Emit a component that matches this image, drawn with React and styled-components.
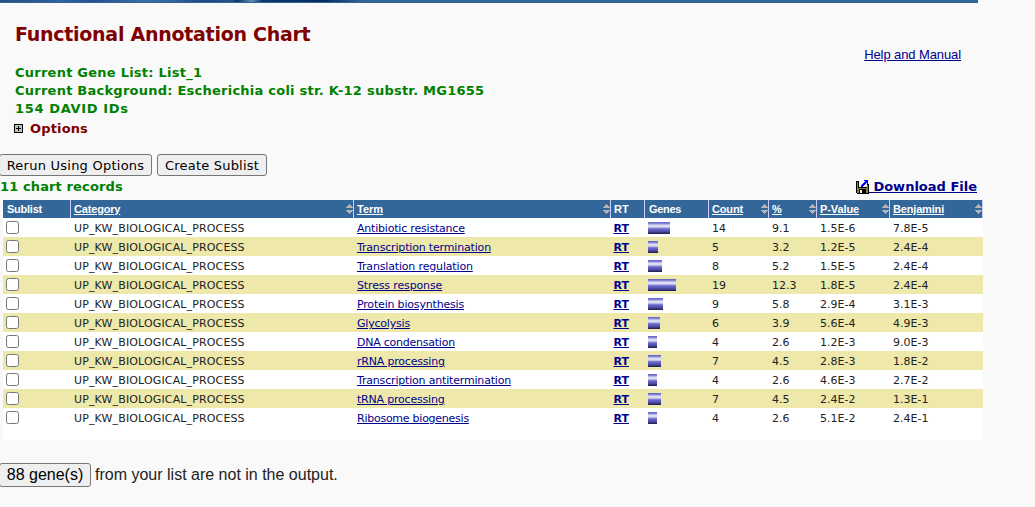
import React from "react";
import styled, { createGlobalStyle } from "styled-components";

const verdana = `Verdana, "DejaVu Sans", sans-serif`;
const arial = `"Liberation Sans", Arial, sans-serif`;

const GlobalStyle = createGlobalStyle`
  * { box-sizing: border-box; }
  body { margin: 0; background: #f9f9f9; color: #222; font-family: ${verdana}; overflow: hidden; }
`;

const Page = styled.main`
  width: 1035px;
  height: 507px;
  overflow: hidden;
`;

const Banner = styled.div`
  width: 978px;
  height: 3px;
  border-bottom: 1px solid #2f6399;
  background: linear-gradient(90deg, #24507f 0, #2a5b92 40px, #2f659e 60px, #234f8e 95px, #3a6da3 140px, #3468a0 170px, #1d4a85 200px, #235287 232px, #0d3164 237px, #5f8fb5 252px, #0f3768 262px, #062c5e 325px, #336699 362px, #336699 100%);
`;

const Intro = styled.header`
  display: flex;
  justify-content: space-between;
  width: 961px;
  height: 151px;
  padding: 19px 0 0 15px;
`;

const Title = styled.h1`
  margin: 0 0 18px;
  font-size: 19px;
  line-height: 24px;
  letter-spacing: -0.27px;
  color: #800000;
  white-space: nowrap;
`;

const Fact = styled.p`
  margin: 0;
  font-size: 13px;
  font-weight: bold;
  line-height: 18px;
  letter-spacing: ${(p) => p.$spacing || 0}px;
  color: #008000;
  white-space: nowrap;
`;

const Options = styled.div`
  display: flex;
  align-items: center;
  gap: 7px;
  height: 20px;
  margin-left: -1px;
  font-size: 13px;
  font-weight: bold;
  letter-spacing: 0.15px;
  color: #800000;
`;

const HelpLink = styled.a`
  height: 16px;
  margin-top: 25px;
  font: 13px/16px ${arial};
  letter-spacing: -0.1px;
  color: #00008b;
  text-decoration: underline;
`;

const Buttons = styled.div`
  display: flex;
  gap: 5px;
  margin-left: -1px;
`;

const Button = styled.button`
  width: ${(p) => p.$width}px;
  height: ${(p) => p.$height || 22}px;
  padding: 0;
  border: 1px solid #767676;
  border-radius: 3px;
  background: #efefef;
  color: #000;
  font: ${(p) => p.$font || `13px ${verdana}`};
  letter-spacing: ${(p) => p.$spacing || 0}px;
  white-space: nowrap;
`;

const Records = styled.div`
  display: flex;
  justify-content: space-between;
  width: 977px;
  height: 24px;
  padding-top: 2px;
`;

const Download = styled.a`
  display: flex;
  font-size: 13px;
  font-weight: bold;
  line-height: 18px;
  color: #00008b;
  text-decoration: underline;
  white-space: pre;
  svg { margin-top: 2px; }
`;

const Table = styled.section`
  width: 980px;
  height: 240px;
  margin-left: 3px;
  background: #fff;
`;

const columns = "68px 283px 257px 34px 64px 60px 48px 73px 93px";

const HeadRow = styled.div`
  display: grid;
  grid-template-columns: ${columns};
  height: 18px;
  background: #336699;
`;

const HeadCell = styled.div`
  display: flex;
  align-items: center;
  justify-content: space-between;
  border-right: 1px solid #ccccff;
  padding-left: ${(p) => p.$pad}px;
  font: bold 11px/18px ${arial};
  letter-spacing: ${(p) => p.$spacing}px;
  color: #fff;
  span { text-decoration: ${(p) => (p.$sortable ? "underline" : "none")}; }
`;

const Row = styled.div`
  display: grid;
  grid-template-columns: ${columns};
  height: 19px;
  background: ${(p) => (p.$striped ? "#eee8aa" : "#fff")};
`;

const Cell = styled.div`
  padding: 1px 0 0 ${(p) => p.$pad || 3}px;
  font-size: 11px;
  line-height: 20px;
  height: 19px;
  letter-spacing: ${(p) => p.$spacing || 0}px;
  white-space: nowrap;
`;

const Check = styled.input`
  display: block;
  width: 13px;
  height: 13px;
  margin: 3px 0 0 3px;
`;

const Link = styled.a`
  color: #00008b;
  text-decoration: underline;
  font-weight: ${(p) => (p.$bold ? "bold" : "normal")};
`;

const Bar = styled.div`
  height: 12px;
  margin: 4px 0 0 3px;
  background: linear-gradient(#6a6acb 0 1px, #8484d4 1px 2px, #b5b5e6 2px 3px, #dcdcf5 3px 4px, #dcdcf5 4px 5px, #b8b8e6 5px 6px, #7d7dd0 6px 7px, #6464c8 7px 8px, #5858b8 8px 9px, #4c4ca4 9px 10px, #38387e 10px 11px, #25255a 11px 12px);
`;

const Footer = styled.footer`
  display: flex;
  align-items: center;
  gap: 4px;
  margin: 23px 0 0 -1px;
  font: 16px ${arial};
  color: #222;
`;

const SortIcon = () => (
  <svg width="7" height="10" viewBox="0 0 7 10" fill="#b4b4b4" shapeRendering="crispEdges">
    <path d="M3 0h1v1h1v1h1v1h1v1H0V3h1V2h1V1h1zM0 6h7v1H6v1H5v1H4v1H3V9H2V8H1V7H0z" />
  </svg>
);

const PlusIcon = () => (
  <svg width="9" height="9" viewBox="0 0 9 9" shapeRendering="crispEdges">
    <rect width="9" height="9" fill="#000" />
    <rect x="1" y="1" width="7" height="7" fill="#c0c0c0" />
    <path d="M4 2h1v2h2v1H5v2H4V5H2V4h2z" fill="#000" />
  </svg>
);

const DiskIcon = () => (
  <svg width="13" height="14" viewBox="0 0 13 14" shapeRendering="crispEdges">
    <path d="M0 1h13v13H1v-1H0z" fill="#000" />
    <path d="M1 2h1v6h9V5h1v8h-2V9H3v4H1z" fill="#808040" />
    <path d="M3 1h10v3h-2v3H3z" fill="#f4f4f4" />
    <path d="M3 9h7v4H3z" fill="#000" />
    <path d="M4 10h2v3H4z" fill="#e4e4e4" />
    <path d="M8 0h4v4h-1V3h-1v1H9v1H8v1H7v1H5V5h1V4h1V3h1V2h1V1H8z" fill="#0000ff" />
  </svg>
);

const heads = [
  ["Sublist", 4, false, -0.25],
  ["Category", 3, true, -0.17],
  ["Term", 3, true, 0],
  ["RT", 3, false, 0],
  ["Genes", 4, false, -0.3],
  ["Count", 3, true, -0.15],
  ["%", 3, true, 0],
  ["P-Value", 3, true, -0.1],
  ["Benjamini", 3, true, -0.17],
];

const rows = [
  ["Antibiotic resistance", -0.2, 22, "14", "9.1", "1.5E-6", "7.8E-5"],
  ["Transcription termination", -0.17, 10, "5", "3.2", "1.2E-5", "2.4E-4"],
  ["Translation regulation", -0.16, 14, "8", "5.2", "1.5E-5", "2.4E-4"],
  ["Stress response", -0.14, 28, "19", "12.3", "1.8E-5", "2.4E-4"],
  ["Protein biosynthesis", -0.18, 15, "9", "5.8", "2.9E-4", "3.1E-3"],
  ["Glycolysis", -0.2, 12, "6", "3.9", "5.6E-4", "4.9E-3"],
  ["DNA condensation", -0.24, 9, "4", "2.6", "1.2E-3", "9.0E-3"],
  ["rRNA processing", -0.2, 13, "7", "4.5", "2.8E-3", "1.8E-2"],
  ["Transcription antitermination", -0.18, 9, "4", "2.6", "4.6E-3", "2.7E-2"],
  ["tRNA processing", -0.2, 13, "7", "4.5", "2.4E-2", "1.3E-1"],
  ["Ribosome biogenesis", -0.25, 9, "4", "2.6", "5.1E-2", "2.4E-1"],
];

export default function App() {
  return (
    <Page>
      <GlobalStyle />
      <Banner />
      <Intro>
        <div>
          <Title>Functional Annotation Chart</Title>
          <Fact $spacing={0.24}>Current Gene List: List_1</Fact>
          <Fact $spacing={0.24}>Current Background: Escherichia coli str. K-12 substr. MG1655</Fact>
          <Fact $spacing={0.65}>154 DAVID IDs</Fact>
          <Options>
            <PlusIcon />
            <span>Options</span>
          </Options>
        </div>
        <HelpLink>Help and Manual</HelpLink>
      </Intro>
      <Buttons>
        <Button $width={153} $spacing={0.24}>Rerun Using Options</Button>
        <Button $width={110} $spacing={0.2}>Create Sublist</Button>
      </Buttons>
      <Records>
        <Fact $spacing={0.12}>11 chart records</Fact>
        <Download>
          <DiskIcon />
          <span> Download File</span>
        </Download>
      </Records>
      <Table>
        <HeadRow>
          {heads.map(([label, pad, sortable, spacing]) => (
            <HeadCell key={label} $pad={pad} $sortable={sortable} $spacing={spacing}>
              <span>{label}</span>
              {sortable && <SortIcon />}
            </HeadCell>
          ))}
        </HeadRow>
        {rows.map(([term, spacing, width, count, percent, p, benjamini], i) => (
          <Row key={term} $striped={i % 2 === 1}>
            <Check type="checkbox" />
            <Cell $spacing={0.14}>UP_KW_BIOLOGICAL_PROCESS</Cell>
            <Cell $spacing={spacing}><Link>{term}</Link></Cell>
            <Cell $pad={2.5}><Link $bold>RT</Link></Cell>
            <Bar style={{ width }} />
            <Cell>{count}</Cell>
            <Cell>{percent}</Cell>
            <Cell>{p}</Cell>
            <Cell>{benjamini}</Cell>
          </Row>
        ))}
      </Table>
      <Footer>
        <Button $width={92} $height={24} $font={`16px ${arial}`}>88 gene(s)</Button>
        <span>from your list are not in the output.</span>
      </Footer>
    </Page>
  );
}
